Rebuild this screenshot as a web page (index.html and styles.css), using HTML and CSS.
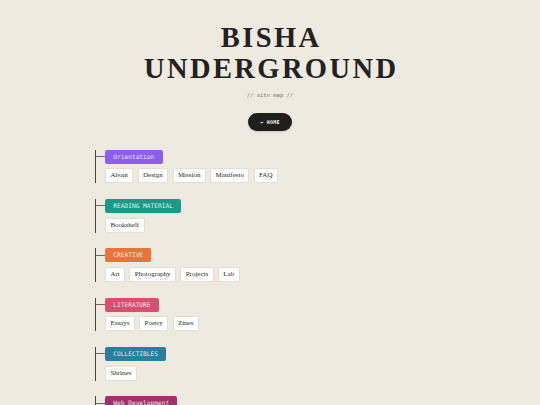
FILE: index.html
```html
<!DOCTYPE html>
<html lang="en">
<head>
<meta charset="utf-8">
<title>Bisha Underground — Site Map</title>
<link rel="stylesheet" href="styles.css">
</head>
<body>
<header class="masthead">
  <h1 class="title">BISHA<br>UNDERGROUND</h1>
  <p class="subtitle">// site map //</p>
  <a class="home-btn" href="#">← HOME</a>
</header>
<main class="map">
  <section class="group">
    <div class="label label-purple">Orientation</div>
    <div class="chips">
      <a class="chip" href="#">About</a>
      <a class="chip" href="#">Design</a>
      <a class="chip" href="#">Mission</a>
      <a class="chip" href="#">Manifesto</a>
      <a class="chip" href="#">FAQ</a>
    </div>
  </section>
  <section class="group">
    <div class="label label-teal">READING MATERIAL</div>
    <div class="chips">
      <a class="chip" href="#">Bookshelf</a>
    </div>
  </section>
  <section class="group">
    <div class="label label-orange">CREATIVE</div>
    <div class="chips">
      <a class="chip" href="#">Art</a>
      <a class="chip" href="#">Photography</a>
      <a class="chip" href="#">Projects</a>
      <a class="chip" href="#">Lab</a>
    </div>
  </section>
  <section class="group">
    <div class="label label-pink">LITERATURE</div>
    <div class="chips">
      <a class="chip" href="#">Essays</a>
      <a class="chip" href="#">Poetry</a>
      <a class="chip" href="#">Zines</a>
    </div>
  </section>
  <section class="group">
    <div class="label label-blue">COLLECTIBLES</div>
    <div class="chips">
      <a class="chip" href="#">Shrines</a>
    </div>
  </section>
  <section class="group">
    <div class="label label-magenta">Web Development</div>
    <div class="chips">
      <a class="chip" href="#">Guides</a>
      <a class="chip" href="#">Tools</a>
    </div>
  </section>
</main>
</body>
</html>
```

FILE: styles.css
```css
html, body {
  margin: 0;
  padding: 0;
}
body {
  background: #efeae0;
  color: #222;
  font-family: "Liberation Serif", "Times New Roman", serif;
  overflow: hidden;
  height: 405px;
}
.masthead {
  display: flex;
  flex-direction: column;
  align-items: center;
  padding-top: 21.5px;
}
.title {
  margin: 0;
  font-family: "Liberation Serif", "Times New Roman", serif;
  font-weight: 700;
  font-size: 28.5px;
  line-height: 31px;
  letter-spacing: 2.4px;
  padding-left: 2.4px;
  text-align: center;
  color: #222;
}
.subtitle {
  margin: 7px 0 0;
  font-family: "DejaVu Sans Mono", monospace;
  font-size: 5.5px;
  line-height: 8px;
  color: #7e796f;
}
.home-btn {
  margin-top: 14.5px;
  display: flex;
  align-items: center;
  justify-content: center;
  width: 43.5px;
  height: 17.7px;
  border-radius: 9px;
  background: #1f1f1f;
  color: #f4f0e8;
  text-decoration: none;
  font-family: "DejaVu Sans Mono", monospace;
  font-weight: 700;
  font-size: 5px;
  letter-spacing: 0.2px;
  box-shadow: 0 1px 2px rgba(0,0,0,0.15);
}
.map {
  width: 350px;
  margin: 19px auto 0;
  display: flex;
  flex-direction: column;
  gap: 15.5px;
}
.group {
  border-left: 1.5px solid #4a4540;
  padding-left: 9px;
  display: flex;
  flex-direction: column;
  align-items: flex-start;
  gap: 4.8px;
}
.label {
  position: relative;
  height: 14px;
  line-height: 14px;
  padding: 0 8.3px;
  border-radius: 2px;
  font-family: "DejaVu Sans Mono", monospace;
  font-size: 6.2px;
  color: rgba(255,255,255,0.88);
}
.label::before {
  content: "";
  position: absolute;
  left: -9px;
  top: 6.5px;
  width: 9px;
  height: 1px;
  background: #6e6860;
}
.label-purple { background: #8d5cf0; }
.label-teal { background: #189a88; }
.label-orange { background: #e8743a; }
.label-pink { background: #d8506f; }
.label-blue { background: #2b7e9e; }
.label-magenta { background: #a3306b; }
.chips {
  display: flex;
  flex-wrap: wrap;
  gap: 4.3px;
}
.chip {
  display: block;
  height: 13px;
  line-height: 13px;
  padding: 0 4.4px;
  background: #ffffff;
  border: 1px solid #e4ded2;
  border-radius: 1px;
  font-family: "Liberation Serif", "Times New Roman", serif;
  font-size: 7px;
  color: #2e2a26;
  text-decoration: none;
}
```
